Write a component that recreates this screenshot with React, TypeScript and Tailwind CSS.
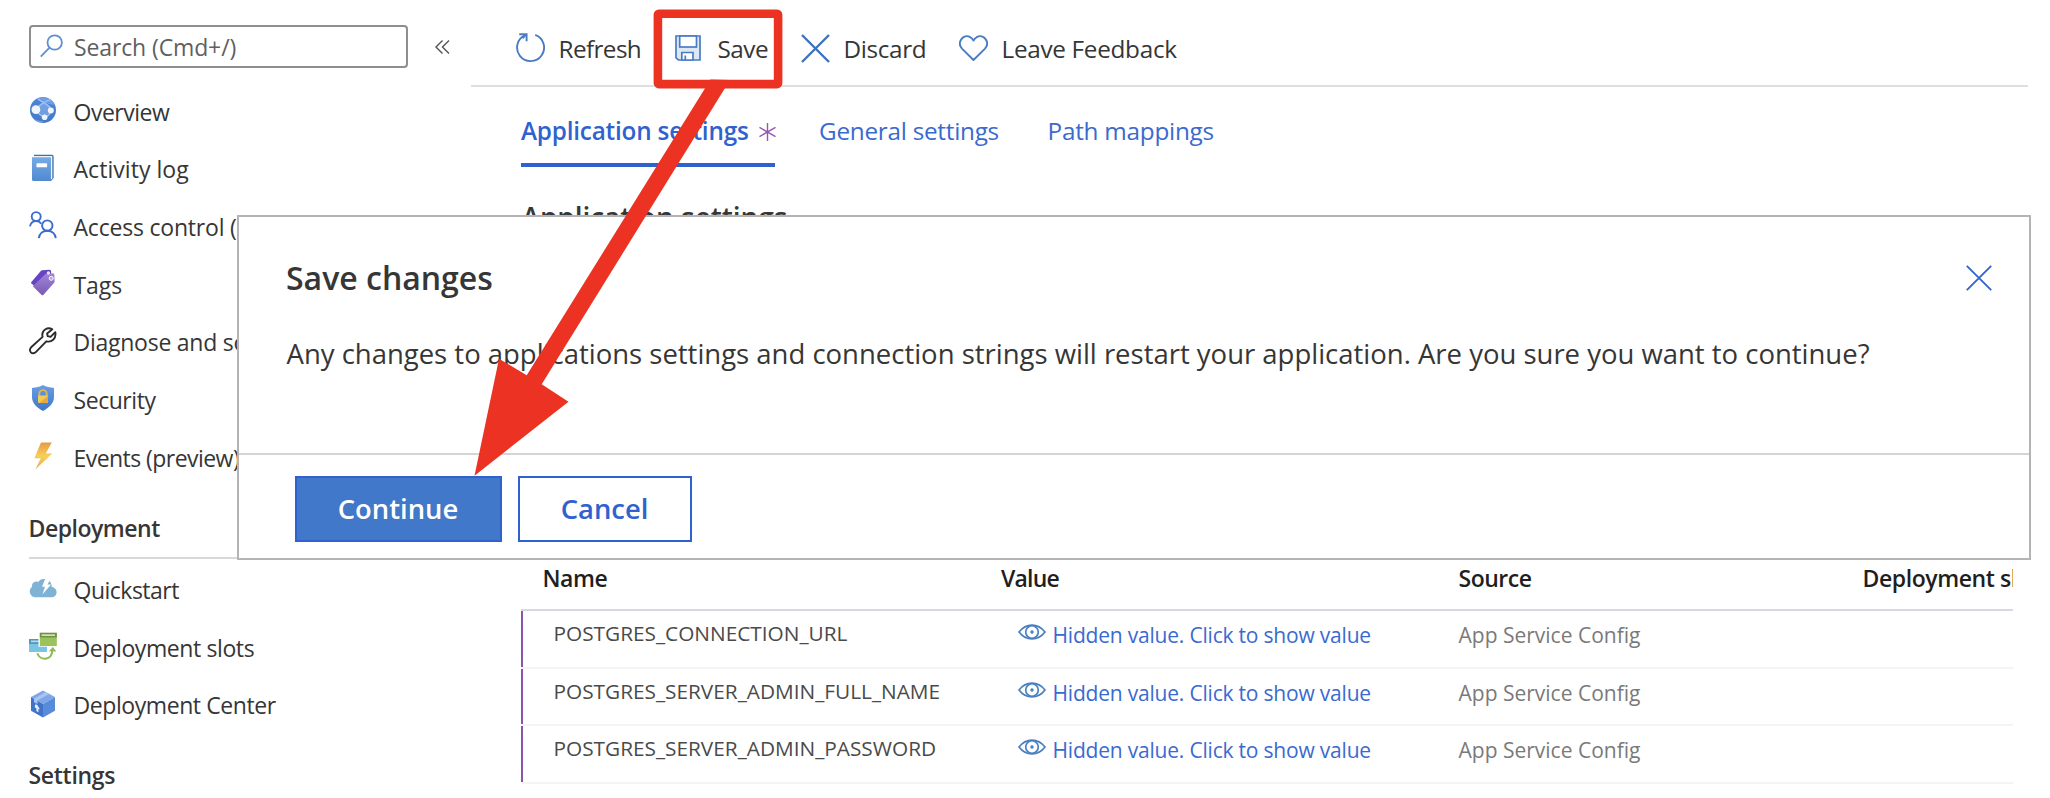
import type { ReactNode } from "react";

const GlobeIcon = () => (
  <svg width="28" height="28" viewBox="0 0 28 28">
    <defs>
      <linearGradient id="globe" x1="0" y1="0" x2="0" y2="1">
        <stop offset="0" stopColor="#4f85d6" />
        <stop offset="1" stopColor="#4179cc" />
      </linearGradient>
      <clipPath id="globeClip">
        <circle cx="14" cy="14" r="13" />
      </clipPath>
    </defs>
    <circle cx="14" cy="14" r="13" fill="url(#globe)" />
    <path d="M7 13.5C11 9 14 7.500 16 7L23 14.500 15.600 21.200Z" fill="#7ca7e6" opacity=".8" />
    <g clipPath="url(#globeClip)" fill="none" stroke="#9bc0f2" strokeWidth="1.7">
      <path d="M7 13.5C12 7 18 4 25 3" />
      <path d="M7 14C9 17 12 20 16 21.5" />
      <path d="M9 3C14 6 20 9 23 14" />
      <path d="M22 15C21 18 19 20 16 21.5" />
      <path d="M2 22C6 25 11 26 14 26" opacity=".5" />
    </g>
    <path d="M10 2 19 8 26 9 23 4 15 1Z" fill="#8bb4ee" opacity=".55" clipPath="url(#globeClip)" />
    <circle cx="6.9" cy="13.7" r="4.4" fill="#f1f4fa" />
    <circle cx="21.8" cy="14.6" r="3" fill="#f1f4fa" />
    <circle cx="15.6" cy="21.2" r="2.8" fill="#f1f4fa" />
  </svg>
);

const BookIcon = () => (
  <svg width="28" height="28" viewBox="0 0 28 28">
    <defs>
      <linearGradient id="book" x1="0" y1="0" x2="0" y2="1">
        <stop offset="0" stopColor="#78abe6" />
        <stop offset="1" stopColor="#4f89d2" />
      </linearGradient>
    </defs>
    <path d="M5 .8H23a1.6 1.6 0 0 1 1.600 1.600V24L22 27H4Z" fill="#3c6fb0" />
    <path d="M5 2H23.300V24.500L21.500 26V4H4Z" fill="#eef3fa" />
    <path d="M3 3.200H21.800V27H4.400A1.600 1.600 0 0 1 3 25.500Z" fill="url(#book)" />
    <rect x="7.500" y="9.300" width="10.600" height="4" rx=".6" fill="#fff" />
  </svg>
);

const PeopleIcon = () => (
  <svg width="28" height="28" viewBox="0 0 28 28" fill="none" stroke="#3a6bd0" strokeWidth="1.900">
    <circle cx="7.200" cy="5.600" r="4.500" />
    <path d="M1 15.400C1.600 11.900 4 10.100 7.100 10.100c2.200 0 4 .9 5.100 2.600" />
    <circle cx="18.300" cy="14.600" r="5.200" />
    <path d="M9.800 27.200c.6-4.600 4-7.400 8.500-7.400s7.900 2.800 8.500 7.400" />
  </svg>
);

const TagIcon = () => (
  <svg width="28" height="28" viewBox="0 0 28 28">
    <defs>
      <linearGradient id="tag" x1="0" y1="0" x2="0" y2="1">
        <stop offset="0" stopColor="#a184d8" />
        <stop offset="1" stopColor="#7a5bb4" />
      </linearGradient>
    </defs>
    <path d="M13 1.300 20.500.8a1.600 1.600 0 0 1 1.600 1.600V8.500L9 19.800 2.400 14.500a1.300 1.300 0 0 1 0-1.600L12 1.800Z" fill="#6644c4" />
    <path d="M16.500 5 23.800 4.300a1.600 1.600 0 0 1 1.600 1.600l.2 7.400L14.500 25.800a1.500 1.500 0 0 1-2.100 0L3.800 17.200Z" fill="url(#tag)" />
    <circle cx="19.400" cy="4" r="1.700" fill="#e9e2f7" />
    <circle cx="22.200" cy="9.300" r="2" fill="#b9a2e3" stroke="#fff" strokeWidth="1" />
  </svg>
);

const WrenchIcon = () => (
  <svg width="28" height="28" viewBox="0 0 28 28" fill="none" stroke="#2c2c2c" strokeWidth="1.900" strokeLinejoin="round">
    <path d="M23.300 2.300C18.500-.5 13.200 3 13.300 7.800c0 .9.1 1.500.3 2.100L2.100 20.300c-1.500 1.500-1.500 3.700-.2 5s3.500 1.200 4.900-.2L17.300 14.300c5 1.500 10.300-2.600 9-9.100L21.600 9.900l-2.900-.7-.6-2.800Z" />
  </svg>
);

const ShieldIcon = () => (
  <svg width="28" height="28" viewBox="0 0 28 28">
    <defs>
      <linearGradient id="shield" x1="0" y1="0" x2="0" y2="1">
        <stop offset="0" stopColor="#6a9ee3" />
        <stop offset="1" stopColor="#3d76cc" />
      </linearGradient>
    </defs>
    <path d="M14 1C17 3 21 3.600 25 3.900V13c0 6.500-5 10.500-11 14C8 23.500 3 19.500 3 13V3.900C7 3.600 11 3 14 1Z" fill="url(#shield)" />
    <path d="M10.300 12.500V9.800a3.700 3.700 0 0 1 7.400 0v2.700" fill="none" stroke="#dfb64d" strokeWidth="1.900" />
    <rect x="9" y="11.600" width="10" height="7.400" rx=".8" fill="#f1cd57" />
    <path d="M19 12v6.200a.8.8 0 0 1-.8.8H10Z" fill="#e3ab3f" />
  </svg>
);

const BoltIcon = () => (
  <svg width="28" height="28" viewBox="0 0 28 28">
    <defs>
      <linearGradient id="bolt" x1="0" y1="0" x2="0" y2="1">
        <stop offset="0" stopColor="#e59a45" />
        <stop offset=".5" stopColor="#f6d056" />
        <stop offset="1" stopColor="#e9a950" />
      </linearGradient>
    </defs>
    <path d="M12 .5H22.800L16.800 11.600H23.200L6.300 27.500 11.800 16.300H5.400Z" fill="url(#bolt)" />
  </svg>
);

const CloudIcon = () => (
  <svg width="28" height="28" viewBox="0 0 28 28">
    <path d="M6.500 23.300A5.900 5.900 0 0 1 3 12.800C2.400 8.800 6.300 6.600 9.200 8 10.800 5 14 4.500 17 5.200 21 6 23 9.500 22.600 12.800c3 .5 5 2.700 5 5.400 0 3-2.300 5.100-5.300 5.100Z" fill="#7fb3d5" />
    <path d="M16.200 4.800 13 12.700h3L13.400 20.500 22 10.500h-3.600L21.400 5.500Z" fill="#fff" />
  </svg>
);

const SlotsIcon = () => (
  <svg width="28" height="28" viewBox="0 0 28 28">
    <rect x="0" y="7" width="18" height="13" fill="#7cc4e3" />
    <rect x="0" y="7" width="18" height="5" fill="#5795bd" />
    <rect x="2" y="8.500" width="9" height="1.700" fill="#b9d9ea" />
    <rect x="9.500" y=".5" width="18.500" height="14.200" fill="#fff" />
    <rect x="10.800" y=".8" width="17" height="13.200" fill="#9cc25c" />
    <rect x="10.800" y=".8" width="17" height="4.600" fill="#6f9144" />
    <rect x="12.600" y="2.300" width="13.400" height="1.700" fill="#d5e3bd" />
    <path d="M8.300 21.300C10.500 28.500 22.800 29.500 23.400 18" fill="none" stroke="#8dba55" strokeWidth="2" />
    <path d="M19.800 19.300 23.800 15l3.600 4.600Z" fill="#8dba55" />
  </svg>
);

const BoxIcon = () => (
  <svg width="28" height="28" viewBox="0 0 28 28">
    <path d="M14 .6 26 7 14 14 2 7Z" fill="#7fa6e6" />
    <path d="M2 7 14 14V27.500L2 20.800Z" fill="#3f74ca" />
    <path d="M26 7 14 14V27.500L26 20.800Z" fill="#5a8bdb" />
    <path d="M16.500 2 20 4 8.500 10.600V14L5 12.200V8.700Z" fill="#a9c4f0" />
    <path d="M6 14.600 8.200 14.700 11 19.500 9.400 18.800V22.200L7.400 21V18.200L5.800 17.600Z" fill="#e8effb" />
  </svg>
);

const RefreshIcon = () => (
  <svg width="29" height="30" viewBox="0 0 29 30" fill="none" stroke="#4a7cc4" strokeWidth="1.900">
    <path d="M19.200 1.900A13.500 13.500 0 1 1 9.200 2.200" />
    <path d="M3.200 1.300H10.600V8.200" />
    <path d="M10.500 1.400 6.500 5.200" />
  </svg>
);

const SaveIcon = () => (
  <svg width="26" height="26" viewBox="0 0 26 26" fill="none" stroke="#4a7cc4" strokeWidth="1.700">
    <path d="M1 1H25V25H3.500L1 22.800Z" fill="#dde8f6" />
    <rect x="4.700" y="1" width="16.800" height="11" fill="#fff" />
    <path d="M6.800 25V17.500H18V25Z" fill="#fff" />
    <path d="M10.300 20.500V25" />
  </svg>
);

const DiscardIcon = () => (
  <svg width="29" height="29" viewBox="0 0 29 29" fill="none" stroke="#3f72bd" strokeWidth="2.400">
    <path d="M1 1 28 28M28 1 1 28" />
  </svg>
);

const HeartIcon = () => (
  <svg width="29" height="26" viewBox="0 0 29 26" fill="none" stroke="#4a7cc4" strokeWidth="1.900" strokeLinejoin="round">
    <path d="M14.500 25 3.200 13.800C-2.800 7.500 4.400-1.700 11.300 2.200c1.500.9 2.500 2 3.200 3.200.7-1.200 1.700-2.300 3.200-3.200 6.900-3.900 14.100 5.300 8.100 11.600Z" />
  </svg>
);

const EyeIcon = () => (
  <svg width="28" height="16" viewBox="0 0 28 16" fill="none" stroke="#4a7fc0" strokeWidth="1.700">
    <path d="M1 8C8-1.300 20-1.300 27 8 20 17.300 8 17.300 1 8Z" />
    <circle cx="14" cy="8" r="6.300" />
    <circle cx="14" cy="8" r="1.700" fill="#4a7fc0" stroke="none" />
  </svg>
);

type Item = { icon: ReactNode; label: string; tracking: string };

const mainItems: Item[] = [
  { icon: <GlobeIcon />, label: "Overview", tracking: "tracking-[-0.5px]" },
  { icon: <BookIcon />, label: "Activity log", tracking: "tracking-[0.05px]" },
  { icon: <PeopleIcon />, label: "Access control (IAM)", tracking: "tracking-[-0.2px]" },
  { icon: <TagIcon />, label: "Tags", tracking: "tracking-[-0.1px]" },
  { icon: <WrenchIcon />, label: "Diagnose and solve problems", tracking: "tracking-[-0.25px]" },
  { icon: <ShieldIcon />, label: "Security", tracking: "tracking-[-0.45px]" },
  { icon: <BoltIcon />, label: "Events (preview)", tracking: "tracking-[-0.55px]" },
];

const deployItems: Item[] = [
  { icon: <CloudIcon />, label: "Quickstart", tracking: "tracking-[-0.5px]" },
  { icon: <SlotsIcon />, label: "Deployment slots", tracking: "tracking-[-0.4px]" },
  { icon: <BoxIcon />, label: "Deployment Center", tracking: "tracking-[-0.42px]" },
];

function NavItem({ icon, label, tracking }: Item) {
  return (
    <div className="flex h-[57.65px] shrink-0 items-center">
      <span className="-mt-[3px] block w-[45px] shrink-0">{icon}</span>
      <span className={`whitespace-nowrap text-[23px] leading-[30px] ${tracking}`}>{label}</span>
    </div>
  );
}

function Command({ icon, label, width, tracking }: { icon: ReactNode; label: string; width: string; tracking: string }) {
  return (
    <div className={`flex shrink-0 items-center ${width}`}>
      <span className="-mt-px block w-[42.5px] shrink-0">{icon}</span>
      <span className={`whitespace-nowrap text-[24.3px] leading-[30px] ${tracking}`}>{label}</span>
    </div>
  );
}

const settings = ["POSTGRES_CONNECTION_URL", "POSTGRES_SERVER_ADMIN_FULL_NAME", "POSTGRES_SERVER_ADMIN_PASSWORD"];

export default function App() {
  return (
    <div className="relative flex h-[798px] w-[2050px] overflow-hidden bg-white font-['Open_Sans','Noto_Sans',sans-serif] text-[#363636]">
      <aside className="flex w-[471px] shrink-0 flex-col overflow-hidden pl-[28.5px] pt-[25px]">
        <div className="flex h-[43px] shrink-0 items-center">
          <div className="flex h-[43px] w-[379px] items-center rounded-[4px] border-2 border-[#8f8e8d] pl-[9px]">
            <svg className="-mt-[1px] mr-[11.5px]" width="23" height="24" viewBox="0 0 23 24" fill="none" stroke="#5b8fd8" strokeWidth="1.8">
              <circle cx="14.7" cy="8.5" r="7.2" />
              <path d="M9.5 13.7.8 22.6" />
            </svg>
            <span className="text-[23px] leading-[30px] tracking-[-0.12px] text-[#5f5f5f]">Search (Cmd+/)</span>
          </div>
          <svg className="ml-[27px]" width="15" height="14" viewBox="0 0 15 14" fill="none" stroke="#555" strokeWidth="1.4">
            <path d="M7.5.6 1 7l6.500 6.400M14 .6 7.500 7l6.500 6.400" />
          </svg>
        </div>
        <nav className="mt-[14.9px] flex w-[209.5px] flex-col overflow-hidden">
          {mainItems.map((item) => (
            <NavItem key={item.label} {...item} />
          ))}
        </nav>
        <div className="flex h-[72.4px] shrink-0 items-end border-b-2 border-[#d8d8d8] pb-[17px] text-[23px] font-semibold leading-[24px] tracking-[-0.47px]">
          Deployment
        </div>
        <nav className="mt-[2.3px] flex flex-col">
          {deployItems.map((item) => (
            <NavItem key={item.label} {...item} />
          ))}
        </nav>
        <div className="mt-[26px] shrink-0 text-[23px] font-semibold leading-[30px] tracking-[-0.3px]">Settings</div>
      </aside>

      <main className="flex w-[1557px] shrink-0 flex-col">
        <div className="flex h-[87px] shrink-0 items-center border-b-2 border-[#dedede] pl-[45px] pt-[12px]">
          <Command icon={<RefreshIcon />} label="Refresh" width="w-[159px]" tracking="tracking-[-0.6px]" />
          <Command icon={<SaveIcon />} label="Save" width="w-[126px]" tracking="tracking-[-0.5px]" />
          <Command icon={<DiscardIcon />} label="Discard" width="w-[158px]" tracking="tracking-[-0.35px]" />
          <Command icon={<HeartIcon />} label="Leave Feedback" width="w-[230px]" tracking="tracking-[-0.3px]" />
        </div>

        <div className="flex h-[80px] shrink-0 pl-[50px] text-[24.3px] text-[#3a6ad0]">
          <div className="flex w-[254px] items-center justify-between border-b-4 border-[#2f62cf] pt-[13px]">
            <span className="whitespace-nowrap font-semibold tracking-[-0.2px] text-[#2f62cf]">Application settings</span>
            <svg className="-mr-px" width="17" height="18" viewBox="0 0 17 18" fill="none" stroke="#9358b0" strokeWidth="1.4">
              <path d="M8.500 0V18M.5 4.400 16.500 13.600M16.500 4.400.5 13.600" />
            </svg>
          </div>
          <div className="mb-[4px] ml-[44px] flex w-[228.5px] items-center pt-[13px] tracking-[-0.26px]">General settings</div>
          <div className="mb-[4px] flex items-center pt-[13px] tracking-[-0.24px]">Path mappings</div>
        </div>

        <h2 className="mt-[30px] h-[40px] shrink-0 pl-[50.5px] text-[28px] font-semibold leading-[40px] tracking-[-0.05px]">Application settings</h2>

        <section className="ml-[50px] mt-[311px] w-[1491.5px] shrink-0 overflow-hidden">
          <div className="grid h-[63px] grid-cols-[480px_457.5px_404px_150px] items-center border-b-2 border-[#d6dae0] text-[23px] font-semibold text-[#1f1f1f]">
            <span className="pl-[21.5px] tracking-[-0.4px]">Name</span>
            <span className="tracking-[-0.8px]">Value</span>
            <span className="tracking-[-0.5px]">Source</span>
            <span className="whitespace-nowrap tracking-[-0.42px]">Deployment slot setting</span>
          </div>
          {settings.map((name) => (
            <div key={name} className="grid h-[57.65px] grid-cols-[480px_457.5px_404px_150px] border-b-2 border-[#f4f4f4] text-[21px] leading-[30px]">
              <div className="border-l-2 border-[#8b54ab] pl-[30.5px] pt-[7px] text-[20.8px] text-[#4a4a4a]">{name}</div>
              <div className="flex items-start pl-[16.5px] pt-[9px] text-[#3a6ad0]">
                <span className="mr-[7px] mt-[4px] block">
                  <EyeIcon />
                </span>
                <span className="whitespace-nowrap tracking-[-0.2px]">Hidden value. Click to show value</span>
              </div>
              <div className="pt-[9px] text-[#7a7a7a]">App Service Config</div>
            </div>
          ))}
        </section>
      </main>

      <div className="absolute left-[236.5px] top-[215px] flex h-[345px] w-[1794px] flex-col border-2 border-[#b4b4b4] bg-white">
        <div className="flex shrink-0 items-start justify-between pl-[47.5px] pr-[37px] pt-[40.5px]">
          <h1 className="text-[32px] font-semibold leading-[40px]">Save changes</h1>
          <svg className="mt-[7px]" width="26" height="26" viewBox="0 0 26 26" fill="none" stroke="#3566cf" strokeWidth="1.9">
            <path d="M.8.8 25.200 25.200M25.200.8.8 25.200" />
          </svg>
        </div>
        <p className="mt-[36px] shrink-0 whitespace-nowrap pl-[48px] text-[27.5px] leading-[40px] tracking-[-0.012px]">
          Any changes to applications settings and connection strings will restart your application. Are you sure you want to continue?
        </p>
        <div className="mt-auto flex h-[105px] shrink-0 items-start gap-[16px] border-t-2 border-[#d4d4d4] pl-[56px] pt-[21px] text-[27.4px] font-semibold">
          <button className="h-[66px] w-[207px] border-2 border-[#2f62cf] bg-[#4178c9] text-white">Continue</button>
          <button className="h-[66px] w-[174px] border-2 border-[#2f62cf] bg-white text-[#2f62cf]">Cancel</button>
        </div>
      </div>

      <svg className="pointer-events-none absolute left-0 top-0" width="2050" height="798" viewBox="0 0 2050 798">
        <rect x="657.9" y="13.7" width="120.2" height="70.4" rx="1" fill="none" stroke="#ec3323" strokeWidth="8.6" strokeLinejoin="round" />
        <path d="M710.500 79.500 730 80 541.700 384.300 568.500 401.700 474.500 475.700 499 358.700 526.700 375.300Z" fill="#ec3323" />
      </svg>
    </div>
  );
}
